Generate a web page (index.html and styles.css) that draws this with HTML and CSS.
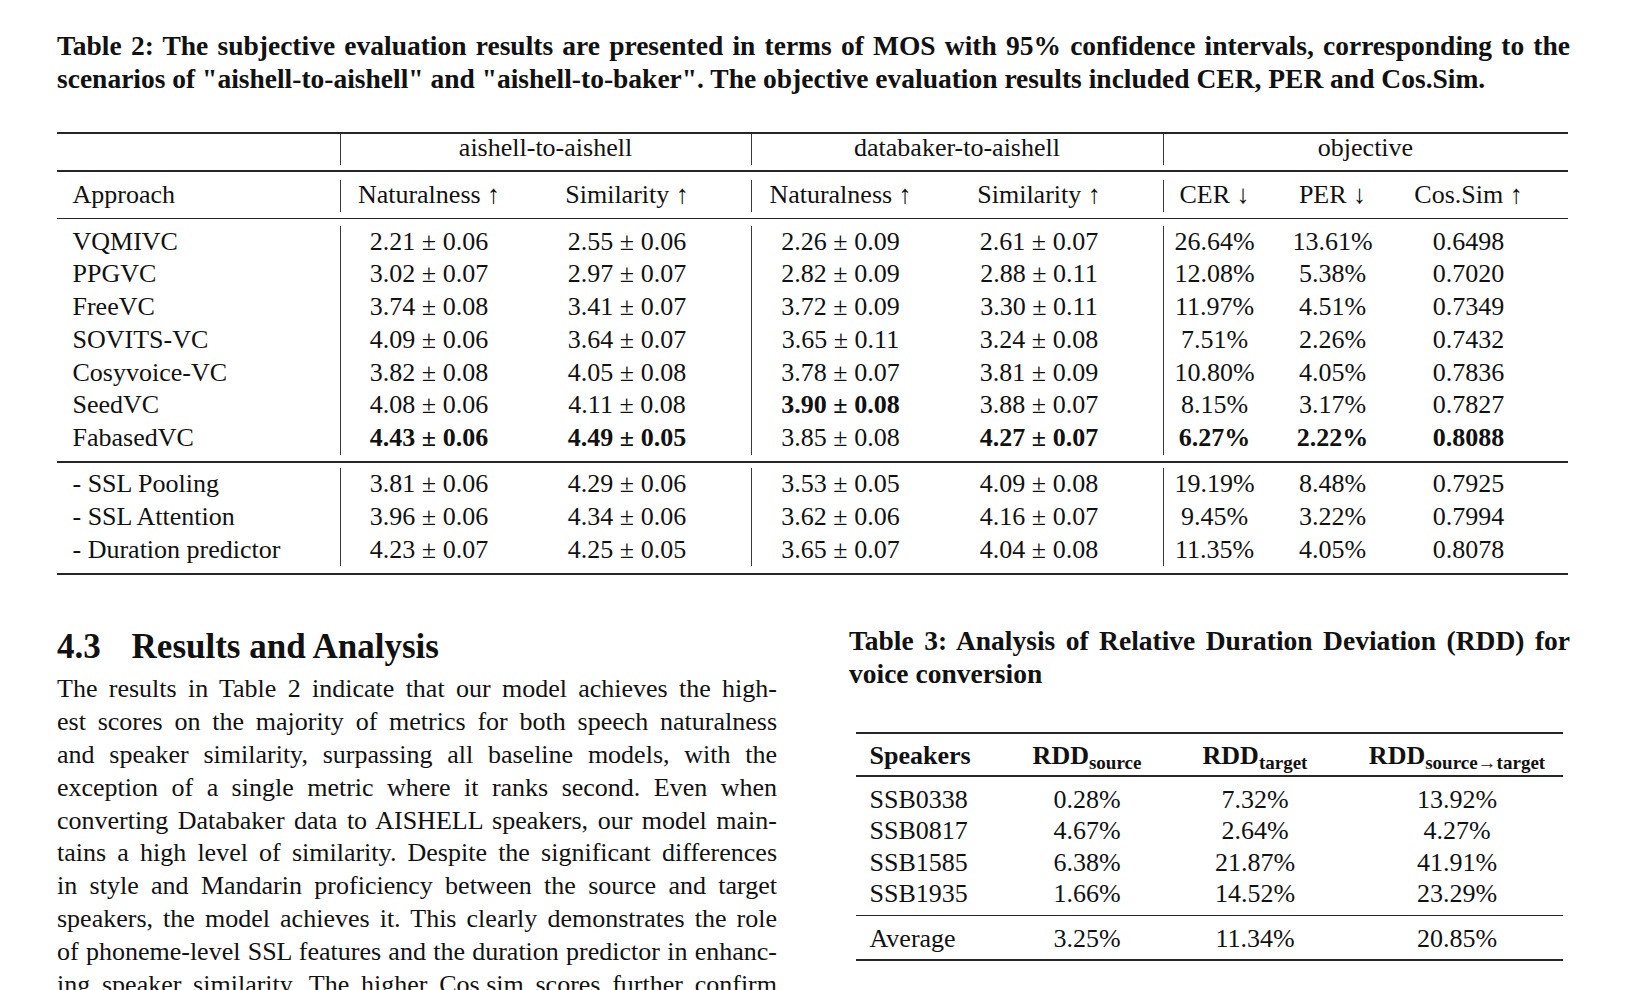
FILE: index.html
```html
<!DOCTYPE html>
<html lang="en">
<head>
<meta charset="utf-8">
<title>Results and Analysis</title>
<link rel="stylesheet" href="styles.css">
</head>
<body>
<div class="page">
  <p class="caption">
    <span class="ln just">Table 2: The subjective evaluation results are presented in terms of MOS with 95% confidence intervals, corresponding to the</span>
    <span class="ln">scenarios of "aishell-to-aishell" and "aishell-to-baker". The objective evaluation results included CER, PER and Cos.Sim.</span>
  </p>

  <table class="t2">
    <colgroup>
      <col class="w-app"><col class="w-nat"><col class="w-sim"><col class="w-nat2"><col class="w-sim"><col class="w-cer"><col class="w-per"><col class="w-cos">
    </colgroup>
    <tbody>
      <tr class="rule thick"><td colspan="8"></td></tr>
      <tr class="grp"><td></td><td colspan="2" class="vl">aishell-to-aishell</td><td colspan="2" class="vl">databaker-to-aishell</td><td colspan="3" class="vl">objective</td></tr>
      <tr class="gap g5"><td colspan="8"></td></tr>
      <tr class="rule"><td colspan="8"></td></tr>
      <tr class="gap g8"><td colspan="8"></td></tr>
      <tr class="hdr"><td>Approach</td><td>Naturalness ↑</td><td>Similarity ↑</td><td>Naturalness ↑</td><td>Similarity ↑</td><td>CER ↓</td><td>PER ↓</td><td>Cos.Sim ↑</td></tr>
      <tr class="gap g6"><td colspan="8"></td></tr>
      <tr class="rule"><td colspan="8"></td></tr>
      <tr class="gap g65"><td colspan="8"></td></tr>
      <tr class="row"><td>VQMIVC</td><td>2.21 ± 0.06</td><td>2.55 ± 0.06</td><td>2.26 ± 0.09</td><td>2.61 ± 0.07</td><td>26.64%</td><td>13.61%</td><td>0.6498</td></tr>
      <tr class="row"><td>PPGVC</td><td>3.02 ± 0.07</td><td>2.97 ± 0.07</td><td>2.82 ± 0.09</td><td>2.88 ± 0.11</td><td>12.08%</td><td>5.38%</td><td>0.7020</td></tr>
      <tr class="row"><td>FreeVC</td><td>3.74 ± 0.08</td><td>3.41 ± 0.07</td><td>3.72 ± 0.09</td><td>3.30 ± 0.11</td><td>11.97%</td><td>4.51%</td><td>0.7349</td></tr>
      <tr class="row"><td>SOVITS-VC</td><td>4.09 ± 0.06</td><td>3.64 ± 0.07</td><td>3.65 ± 0.11</td><td>3.24 ± 0.08</td><td>7.51%</td><td>2.26%</td><td>0.7432</td></tr>
      <tr class="row"><td>Cosyvoice-VC</td><td>3.82 ± 0.08</td><td>4.05 ± 0.08</td><td>3.78 ± 0.07</td><td>3.81 ± 0.09</td><td>10.80%</td><td>4.05%</td><td>0.7836</td></tr>
      <tr class="row"><td>SeedVC</td><td>4.08 ± 0.06</td><td>4.11 ± 0.08</td><td><b>3.90 ± 0.08</b></td><td>3.88 ± 0.07</td><td>8.15%</td><td>3.17%</td><td>0.7827</td></tr>
      <tr class="row"><td>FabasedVC</td><td><b>4.43 ± 0.06</b></td><td><b>4.49 ± 0.05</b></td><td>3.85 ± 0.08</td><td><b>4.27 ± 0.07</b></td><td><b>6.27%</b></td><td><b>2.22%</b></td><td><b>0.8088</b></td></tr>
      <tr class="gap g64"><td colspan="8"></td></tr>
      <tr class="rule"><td colspan="8"></td></tr>
      <tr class="gap g51"><td colspan="8"></td></tr>
      <tr class="row"><td>- SSL Pooling</td><td>3.81 ± 0.06</td><td>4.29 ± 0.06</td><td>3.53 ± 0.05</td><td>4.09 ± 0.08</td><td>19.19%</td><td>8.48%</td><td>0.7925</td></tr>
      <tr class="row"><td>- SSL Attention</td><td>3.96 ± 0.06</td><td>4.34 ± 0.06</td><td>3.62 ± 0.06</td><td>4.16 ± 0.07</td><td>9.45%</td><td>3.22%</td><td>0.7994</td></tr>
      <tr class="row"><td>- Duration predictor</td><td>4.23 ± 0.07</td><td>4.25 ± 0.05</td><td>3.65 ± 0.07</td><td>4.04 ± 0.08</td><td>11.35%</td><td>4.05%</td><td>0.8078</td></tr>
      <tr class="gap g7"><td colspan="8"></td></tr>
      <tr class="rule thick"><td colspan="8"></td></tr>
    </tbody>
  </table>

  <div class="cols">
    <section class="left">
      <h2 class="heading"><span class="num">4.3</span>Results and Analysis</h2>
      <p class="para">
        <span class="ln just">The results in Table 2 indicate that our model achieves the high-</span>
        <span class="ln just">est scores on the majority of metrics for both speech naturalness</span>
        <span class="ln just">and speaker similarity, surpassing all baseline models, with the</span>
        <span class="ln just">exception of a single metric where it ranks second. Even when</span>
        <span class="ln just">converting Databaker data to AISHELL speakers, our model main-</span>
        <span class="ln just">tains a high level of similarity. Despite the significant differences</span>
        <span class="ln just">in style and Mandarin proficiency between the source and target</span>
        <span class="ln just">speakers, the model achieves it. This clearly demonstrates the role</span>
        <span class="ln just">of phoneme-level SSL features and the duration predictor in enhanc-</span>
        <span class="ln just">ing speaker similarity. The higher Cos.sim scores further confirm</span>
      </p>
    </section>

    <section class="right">
      <p class="caption">
        <span class="ln just">Table 3: Analysis of Relative Duration Deviation (RDD) for</span>
        <span class="ln">voice conversion</span>
      </p>
      <table class="t3">
        <colgroup>
          <col class="w3-a"><col class="w3-b"><col class="w3-c"><col class="w3-d">
        </colgroup>
        <tbody>
          <tr class="rule thick"><td colspan="4"></td></tr>
          <tr class="hdr3"><td>Speakers</td><td>RDD<sub>source</sub></td><td>RDD<sub>target</sub></td><td>RDD<sub>source→target</sub></td></tr>
          <tr class="rule"><td colspan="4"></td></tr>
          <tr class="gap g675"><td colspan="4"></td></tr>
          <tr class="row3"><td>SSB0338</td><td>0.28%</td><td>7.32%</td><td>13.92%</td></tr>
          <tr class="row3"><td>SSB0817</td><td>4.67%</td><td>2.64%</td><td>4.27%</td></tr>
          <tr class="row3"><td>SSB1585</td><td>6.38%</td><td>21.87%</td><td>41.91%</td></tr>
          <tr class="row3"><td>SSB1935</td><td>1.66%</td><td>14.52%</td><td>23.29%</td></tr>
          <tr class="gap g5"><td colspan="4"></td></tr>
          <tr class="rule"><td colspan="4"></td></tr>
          <tr class="gap g65"><td colspan="4"></td></tr>
          <tr class="row3"><td>Average</td><td>3.25%</td><td>11.34%</td><td>20.85%</td></tr>
          <tr class="gap g5"><td colspan="4"></td></tr>
          <tr class="rule thick"><td colspan="4"></td></tr>
        </tbody>
      </table>
    </section>
  </div>
</div>
</body>
</html>
```

FILE: styles.css
```css
html, body {
  margin: 0;
  padding: 0;
  background: #ffffff;
  overflow: hidden;
}

body {
  font-family: "Liberation Serif", "Times New Roman", serif;
  color: #111111;
}

.page {
  width: 1513px;
  padding: 29px 55px 0 57px;
}

/* captions */
.caption {
  margin: 0;
  font-size: 27.5px;
  line-height: 33px;
  font-weight: bold;
}

.ln {
  display: block;
}

.just {
  text-align: justify;
  text-align-last: justify;
}

/* shared table bits */
table {
  border-collapse: separate;
  border-spacing: 0;
  table-layout: fixed;
}

td {
  padding: 0;
  white-space: nowrap;
}

tr.rule { height: 1.5px; }
tr.rule.thick { height: 2px; }
tr.rule td { background: #262626; font-size: 0; line-height: 0; }

tr.gap td { font-size: 0; line-height: 0; }
tr.g5 { height: 5px; }
tr.g51 { height: 5.1px; }
tr.g64 { height: 6.4px; }
tr.g6 { height: 6px; }
tr.g65 { height: 6.5px; }
tr.g675 { height: 6.75px; }
tr.g7 { height: 7px; }
tr.g8 { height: 8px; }

.vl {
  background: linear-gradient(#3a3a3a, #3a3a3a) no-repeat left top / 1px 100%;
}

/* Table 2 */
.t2 {
  width: 1511px;
  margin-top: 37px;
  font-size: 26px;
}

.w-app { width: 283px; }
.w-nat { width: 178px; }
.w-sim { width: 233px; }
.w-nat2 { width: 179px; }
.w-cer { width: 103px; }
.w-per { width: 133px; }
.w-cos { width: 169px; }

.t2 td {
  text-align: center;
  vertical-align: top;
}

tr.grp { height: 31px; }
tr.grp td { line-height: 28px; }

tr.hdr { height: 32px; }
tr.hdr td { line-height: 30px; }

tr.row { height: 32.8px; }
tr.row td { line-height: 32.8px; }

.t2 tr.hdr td:first-child,
.t2 tr.row td:first-child {
  text-align: left;
  padding-left: 15.5px;
}

.t2 tr.hdr td:nth-child(2),
.t2 tr.hdr td:nth-child(4),
.t2 tr.hdr td:nth-child(6),
.t2 tr.row td:nth-child(2),
.t2 tr.row td:nth-child(4),
.t2 tr.row td:nth-child(6) {
  background: linear-gradient(#3a3a3a, #3a3a3a) no-repeat left top / 1px 100%;
}

.t2 tr.hdr td:nth-child(3),
.t2 tr.hdr td:nth-child(5),
.t2 tr.row td:nth-child(3),
.t2 tr.row td:nth-child(5) {
  padding-right: 15px;
}

.t2 tr.hdr td:nth-child(8),
.t2 tr.row td:nth-child(8) {
  padding-right: 30px;
}

b {
  font-weight: bold;
}

/* lower two columns */
.cols {
  display: flex;
  gap: 72px;
  margin-top: 49px;
}

.left {
  width: 720px;
  flex: none;
}

.right {
  width: 721px;
  flex: none;
}

.heading {
  margin: 0 0 4.5px 0;
  padding-top: 1px;
  font-size: 35px;
  line-height: 43px;
  font-weight: bold;
}

.heading .num {
  display: inline-block;
  width: 74.6px;
}

.para {
  margin: 0;
  font-size: 26px;
  line-height: 32.9px;
}

/* Table 3 */
.t3 {
  width: 707px;
  margin: 41.8px 0 0 7px;
  font-size: 26px;
}

.w3-a { width: 154px; }
.w3-b { width: 154px; }
.w3-c { width: 182px; }
.w3-d { width: 217px; }

.t3 td {
  text-align: center;
  vertical-align: top;
}

.t3 td:first-child {
  text-align: left;
  padding-left: 13.5px;
}

.t3 td:nth-child(4) {
  padding-left: 5px;
}

tr.hdr3 { height: 41.2px; }
tr.hdr3 td {
  padding-top: 7px;
  line-height: 30px;
  font-weight: bold;
}

sub {
  font-size: 19px;
  line-height: 0;
  vertical-align: -5px;
}

tr.row3 { height: 31.5px; }
tr.row3 td { line-height: 31.5px; }
```
